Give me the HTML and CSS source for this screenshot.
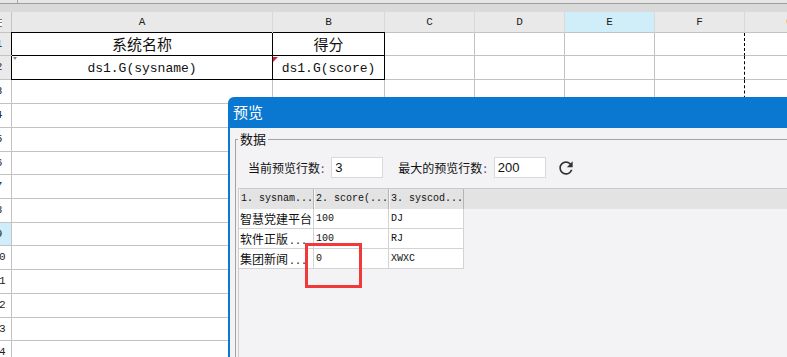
FILE: index.html
```html
<!DOCTYPE html>
<html lang="zh-CN">
<head>
    <meta charset="UTF-8">
    <title>预览</title>
    <link rel="stylesheet" href="styles.css">
</head>
<body>
    <div class="topbar"><span class="topbar-tab"></span></div>
    <div class="toolstrip"></div>

    <div class="sheet">
        <div class="corner"><span class="corner-mark"></span></div>
        <div class="colhead">A</div>
        <div class="colhead">B</div>
        <div class="colhead">C</div>
        <div class="colhead">D</div>
        <div class="colhead selected">E</div>
        <div class="colhead">F</div>
        <div class="colhead">G</div>

        <div class="rowhead title"><span>1</span></div>
        <div class="cell box box-tl title-cell">系统名称</div>
        <div class="cell box box-t title-cell">得分</div>
        <div class="cell"></div>
        <div class="cell"></div>
        <div class="cell"></div>
        <div class="cell pagebreak"></div>
        <div class="cell"></div>

        <div class="rowhead title"><span>2</span></div>
        <div class="cell box box-l expr"><span class="mark-expand"></span>ds1.G(sysname)</div>
        <div class="cell box expr"><span class="mark-flag"></span>ds1.G(score)</div>
        <div class="cell"></div>
        <div class="cell"></div>
        <div class="cell"></div>
        <div class="cell pagebreak"></div>
        <div class="cell"></div>
    </div>

    <div class="dialog">
        <div class="dialog-title">预览</div>
        <div class="dialog-body">
            <fieldset class="group">
                <legend>数据</legend>
                <div class="rowcount">
                    <label>当前预览行数<i>:</i></label>
                    <input type="text" value="3">
                    <label class="gap">最大的预览行数<i>:</i></label>
                    <input type="text" value="200">
                    <svg class="refresh" width="20" height="20" viewBox="0 0 24 24">
                        <path d="M17.65 6.35A7.96 7.96 0 0 0 12 4c-4.42 0-7.99 3.58-7.99 8s3.57 8 7.99 8c3.73 0 6.84-2.55 7.73-6h-2.08A5.99 5.99 0 0 1 12 18c-3.31 0-6-2.690-6-6s2.69-6 6-6c1.66 0 3.14.69 4.22 1.78L13 11h7V4l-2.35 2.35z" fill="#333"/>
                    </svg>
                </div>
                <div class="preview">
                    <div class="preview-head">
                        <div class="hcell">1. sysnam...</div>
                        <div class="hcell">2. score(...</div>
                        <div class="hcell">3. syscod...</div>
                    </div>
                    <div class="preview-row">
                        <div class="pcell">智慧党建平台</div>
                        <div class="pcell mono">100</div>
                        <div class="pcell mono">DJ</div>
                    </div>
                    <div class="preview-row">
                        <div class="pcell">软件正版<span class="mono">...</span></div>
                        <div class="pcell mono">100</div>
                        <div class="pcell mono">RJ</div>
                    </div>
                    <div class="preview-row">
                        <div class="pcell">集团新闻<span class="mono">...</span></div>
                        <div class="pcell mono">0</div>
                        <div class="pcell mono">XWXC</div>
                    </div>
                </div>
            </fieldset>
        </div>
        <div class="callout"></div>
    </div>

    <script>
        // empty rows 3..14 of the design sheet
        let sheet = document.querySelector(".sheet");
        for (let r = 3; r <= 14; r++) {
            let html = `<div class="rowhead${r === 9 ? " selected" : ""}"><span>${r}</span></div>`;
            for (let c = 0; c < 7; c++) {
                html += `<div class="cell${c === 5 ? " pagebreak" : ""}"></div>`;
            }
            sheet.insertAdjacentHTML("beforeend", html);
        }
    </script>
</body>
</html>
```

FILE: styles.css
```css
html, body {
    margin: 0;
    padding: 0;
}
body {
    width: 787px;
    height: 357px;
    overflow: hidden;
    position: relative;
    background: #fff;
    font-family: "Noto Sans CJK SC", sans-serif;
    color: #111;
}

/* window chrome above the sheet */
.topbar {
    height: 3px;
    background: #e6e6e6;
    border-bottom: 1px solid #9e9e9e;
}
.topbar-tab {
    display: block;
    width: 17px;
    height: 3px;
    border-right: 1px solid #a8a8a8;
}
.toolstrip {
    height: 8px;
    background: #dadadb;
}

/* design sheet */
.sheet {
    display: grid;
    grid-template-columns: 12px 261px 112px 90px 90px 90px 90px 90px;
    grid-template-rows: 21px 23px 24px 24px 24px 24px 23px 24px 24px 23px 24px 24px 24px 23px 24px;
    width: 849px;
}
.sheet > div {
    box-sizing: border-box;
    border-right: 1px solid #c3c3c3;
    border-bottom: 1px solid #c3c3c3;
    position: relative;
    overflow: hidden;
}
.corner, .colhead {
    background: #e9e9e9;
}
.colhead {
    border-right-color: #d9d9d9 !important;
    font-family: "Liberation Mono", monospace;
    font-size: 11px;
    line-height: 20px;
    text-align: center;
    color: #222;
}
.colhead.selected {
    background: #cfeef9;
}
.corner-mark {
    display: block;
    width: 2px;
    height: 6px;
    margin-top: 7px;
    border-top: 1px solid #777;
    border-bottom: 1px solid #777;
    background: linear-gradient(#fff 2px, #777 2px, #777 3px, #fff 3px);
}
.rowhead {
    font-family: "Liberation Mono", monospace;
    font-size: 11px;
    color: #222;
}
.rowhead span {
    display: block;
    width: 26px;
    margin-left: -14px;
    text-align: center;
    line-height: 23px;
}
.rowhead.title {
    background: #eaeaea;
}
.rowhead.selected {
    background: #cfeef9;
}

.box {
    border-right-color: #000 !important;
    border-bottom-color: #000 !important;
}
.box-tl {
    box-shadow: -1px -1px 0 #000;
}
.box-t {
    box-shadow: 0 -1px 0 #000;
}
.box-l {
    box-shadow: -1px 0 0 #000;
}
.title-cell {
    text-align: center;
    font-size: 15px;
    line-height: 22px;
    color: #111;
}
.expr {
    text-align: center;
    font-family: "Liberation Mono", monospace;
    font-size: 13px;
    line-height: 26px;
    color: #111;
}
.mark-expand {
    position: absolute;
    left: 1px;
    top: 1px;
    width: 0;
    height: 0;
    border-left: 2px solid transparent;
    border-right: 2px solid transparent;
    border-top: 3px solid #888;
}
.mark-flag {
    position: absolute;
    left: 0;
    top: 1px;
    width: 0;
    height: 0;
    border-top: 5px solid #e0203a;
    border-right: 5px solid transparent;
}
.pagebreak {
    border-right: 1px dashed #000 !important;
}

/* preview dialog */
.dialog {
    position: absolute;
    left: 228px;
    top: 97px;
    width: 600px;
    height: 280px;
}
.dialog-title {
    height: 31px;
    line-height: 30px;
    padding-left: 5px;
    background: #0a78d0;
    color: #fff;
    font-size: 15px;
    border-top-left-radius: 6px;
}
.dialog-body {
    height: 249px;
    background: #f3f3f5;
    border-left: 2px solid #0a78d0;
    padding-top: 1px;
}
.group {
    margin: 2px 0 0 5px;
    padding: 0;
    border: 1px solid #a3a3a3;
    border-right: none;
    height: 240px;
}
.group legend {
    margin-left: 2px;
    padding: 0 2px;
    font-size: 13px;
    line-height: 16px;
    color: #111;
}
.rowcount {
    display: flex;
    align-items: center;
    padding: 10px 0 0 12px;
    font-size: 12px;
}
.rowcount label i {
    font-style: normal;
    color: #6e3a82;
    margin-left: 1px;
}
.rowcount input {
    box-sizing: border-box;
    width: 52px;
    height: 21px;
    margin: 0 0 0 7px;
    padding: 0 3px;
    border: 1px solid #d9d9d9;
    background: #fff;
    font-family: "Liberation Sans", Arial, sans-serif;
    font-size: 13px;
    color: #111;
    outline: none;
}
.rowcount .gap {
    margin-left: 15px;
}
.refresh {
    margin-left: 10px;
}

.preview {
    margin: 10px 0 0 2px;
    border-left: 1px solid #cfcfcf;
    height: 200px;
}
.preview-head {
    display: flex;
    height: 20px;
    background: #e3e3e3;
    border-top: 1px solid #cacaca;
}
.hcell {
    box-sizing: border-box;
    width: 75px;
    padding-left: 1px;
    border-left: 1px solid #f7f7f7;
    border-right: 1px solid #b5b5b5;
    font-family: "Liberation Mono", monospace;
    font-size: 10px;
    line-height: 20px;
    color: #111;
    white-space: nowrap;
    overflow: hidden;
}
.preview-row {
    display: flex;
    height: 20px;
}
.pcell {
    box-sizing: border-box;
    width: 75px;
    padding-left: 1px;
    background: #fff;
    border-right: 1px solid #d3d3d3;
    border-bottom: 1px solid #d3d3d3;
    font-size: 12px;
    line-height: 19px;
    white-space: nowrap;
    overflow: hidden;
}
.mono {
    font-family: "Liberation Mono", monospace;
    font-size: 10px;
    padding-left: 1px;
}
.pcell.mono {
    padding-left: 2px;
}

/* red annotation drawn over the preview */
.callout {
    position: absolute;
    left: 77px;
    top: 146px;
    width: 51px;
    height: 39px;
    border: 3px solid #f03a3a;
}
```
